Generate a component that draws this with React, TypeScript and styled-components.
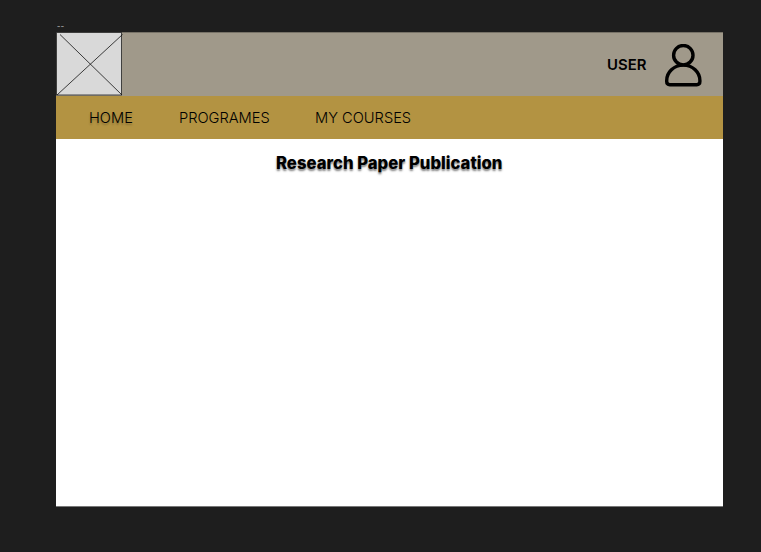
import React from "react";
import styled, { createGlobalStyle } from "styled-components";

const GlobalStyle = createGlobalStyle`
  * { box-sizing: border-box; }
  body { margin: 0; background: #1e1e1e; font-family: Inter, "Liberation Sans", sans-serif; }
`;

const Canvas = styled.main`
  height: 552px;
  padding: 23px 38px 0 56px;
  overflow: hidden;
  background: #1e1e1e;
`;

const FrameLabel = styled.div`
  height: 9px;
  padding-left: 1px;
  color: #8a8a8a;
  font-size: 7px;
  font-weight: 900;
  line-height: 8px;
  letter-spacing: 0.5px;
`;

const Frame = styled.section`
  width: 667px;
  height: 475px;
  background: #fff;
  border-bottom: 1px solid #777;
`;

const Header = styled.header`
  display: flex;
  align-items: center;
  height: 64px;
  background: #a0998a;
  border-top: 1px solid #777267;
`;

const Logo = styled.svg`
  display: block;
  width: 67px;
  height: 64px;
  margin-top: -1px;
`;

const UserName = styled.span`
  width: 43px;
  margin-left: auto;
  color: #000;
  font-size: 14.9px;
  font-weight: 600;
  line-height: 18px;
  white-space: nowrap;
`;

const Avatar = styled.svg`
  display: block;
  width: 38px;
  height: 44px;
  margin: 2px 21px 0 14px;
`;

const Nav = styled.nav`
  display: flex;
  height: 43px;
  padding-left: 33px;
  background: #b39342;
`;

const NavItem = styled.a<{ $width: number; $raised?: boolean }>`
  width: ${({ $width }) => $width}px;
  color: #000;
  font-size: 14.65px;
  font-weight: 300;
  line-height: 44px;
  white-space: nowrap;
  text-shadow: ${({ $raised }) => ($raised ? "0 2px 2px rgba(0, 0, 0, 0.25)" : "none")};
`;

const Title = styled.h1`
  margin: 14px 0 0 220px;
  color: #000;
  font-size: 16.7px;
  font-weight: 800;
  line-height: 20px;
  white-space: nowrap;
  text-shadow: 0 2px 2px rgba(0, 0, 0, 0.5);
`;

export default function App() {
  return (
    <>
      <GlobalStyle />
      <Canvas>
        <FrameLabel>--</FrameLabel>
        <Frame>
          <Header>
            <Logo viewBox="0 0 67 64" fill="none">
              <rect x="0.5" y="0.5" width="65" height="62.5" fill="#d9d9d9" stroke="#333" strokeWidth="0.9" />
              <path d="M4 2.5L66 63M1 63L66.5 2.5" stroke="#111" strokeWidth="0.8" />
            </Logo>
            <UserName>USER</UserName>
            <Avatar viewBox="0 0 38 44" fill="none" stroke="#000" strokeWidth="3.4">
              <circle cx="19.3" cy="11.2" r="9.7" />
              <path d="M19.3 21.1C9.8 21.1 2.7 28.4 2.7 36.5V37.6C2.7 39.5 3.9 40.7 5.8 40.7H32.8C34.7 40.7 35.9 39.5 35.9 37.6V36.5C35.9 28.4 28.8 21.1 19.3 21.1Z" />
            </Avatar>
          </Header>
          <Nav>
            <NavItem $width={90} $raised>HOME</NavItem>
            <NavItem $width={136}>PROGRAMES</NavItem>
            <NavItem $width={100}>MY COURSES</NavItem>
          </Nav>
          <Title>Research Paper Publication</Title>
        </Frame>
      </Canvas>
    </>
  );
}
